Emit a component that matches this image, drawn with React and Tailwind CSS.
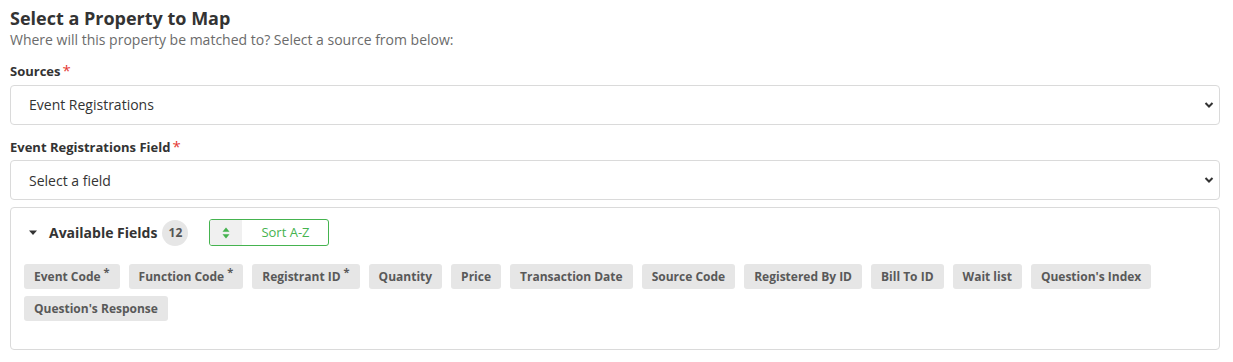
import React from "react";

const fields = [
  { name: "Event Code", req: true },
  { name: "Function Code", req: true },
  { name: "Registrant ID", req: true },
  { name: "Quantity" },
  { name: "Price" },
  { name: "Transaction Date" },
  { name: "Source Code" },
  { name: "Registered By ID" },
  { name: "Bill To ID" },
  { name: "Wait list" },
  { name: "Question's Index" },
  { name: "Question's Response" },
];

function Chevron() {
  return (
    <svg width="10" height="8" viewBox="0 0 10 8" className="shrink-0">
      <path d="M1.5 2 L5 5.5 L8.5 2" fill="none" stroke="#333" strokeWidth="2" />
    </svg>
  );
}

function FakeSelect({ value }) {
  return (
    <div className="flex h-[40px] items-center justify-between rounded-[4px] border border-[#dadada] bg-white pl-[18px] pr-[5px] text-[14px] text-[#333]">
      <span>{value}</span>
      <Chevron />
    </div>
  );
}

function Label({ children }) {
  return (
    <div className="flex items-start text-[13px] font-bold text-[#333]">
      <span>{children}</span>
      <span className="ml-[2px] -mt-[3px] text-[15px] font-normal text-[#e53935]">*</span>
    </div>
  );
}

export default function App() {
  return (
    <div className="w-[1233px] h-[362px] bg-white px-[10px] pt-[5px] pr-[13px]" style={{ fontFamily: '"Open Sans", sans-serif' }}>
      <h1 className="text-[18px] font-bold leading-[26px] text-[#333]">Select a Property to Map</h1>
      <p className="text-[14px] leading-[18px] text-[#6b6b6b]">Where will this property be matched to? Select a source from below:</p>

      <div className="mt-[13px]">
        <Label>Sources</Label>
      </div>
      <div className="mt-[3px]">
        <FakeSelect value="Event Registrations" />
      </div>

      <div className="mt-[13px]">
        <Label>Event Registrations Field</Label>
      </div>
      <div className="mt-[3px]">
        <FakeSelect value="Select a field" />
      </div>

      <div className="mt-[7px] h-[143px] rounded-[4px] border border-[#dadada] bg-white px-[13px] pt-[11px]">
        <div className="flex items-center">
          <svg width="10" height="6" viewBox="0 0 10 6" className="ml-[4px]">
            <path d="M1 0.5 L9 0.5 L5 5 Z" fill="#333" />
          </svg>
          <span className="ml-[11px] text-[14px] font-bold text-[#333]">Available Fields</span>
          <span className="ml-[5px] flex h-[26px] w-[26px] items-center justify-center rounded-full bg-[#e6e6e6] text-[12px] font-bold text-[#555]">12</span>
          <div className="ml-[21px] flex h-[27px] w-[120px] overflow-hidden rounded-[3px] border border-[#45b34f]">
            <div className="flex w-[32px] items-center justify-center bg-[#f0f0f0]">
              <svg width="8" height="12" viewBox="0 0 8 12">
                <path d="M4 0.5 L7.5 4.8 L0.5 4.8 Z" fill="#45b34f" />
                <path d="M4 11.5 L7.5 7.2 L0.5 7.2 Z" fill="#45b34f" />
              </svg>
            </div>
            <div className="flex flex-1 items-center justify-center text-[13px] text-[#45b34f]">Sort A-Z</div>
          </div>
        </div>
        <div className="mt-[18px] flex flex-wrap gap-x-[9px] gap-y-[7px]">
          {fields.map((f) => (
            <div key={f.name} className="flex h-[25px] items-center rounded-[3px] bg-[#e6e6e6] px-[10px] text-[12px] font-bold text-[#595959]">
              <span>{f.name}</span>
              {f.req && <span className="ml-[3px] -mt-[8px] text-[11px]">*</span>}
            </div>
          ))}
        </div>
      </div>
    </div>
  );
}
